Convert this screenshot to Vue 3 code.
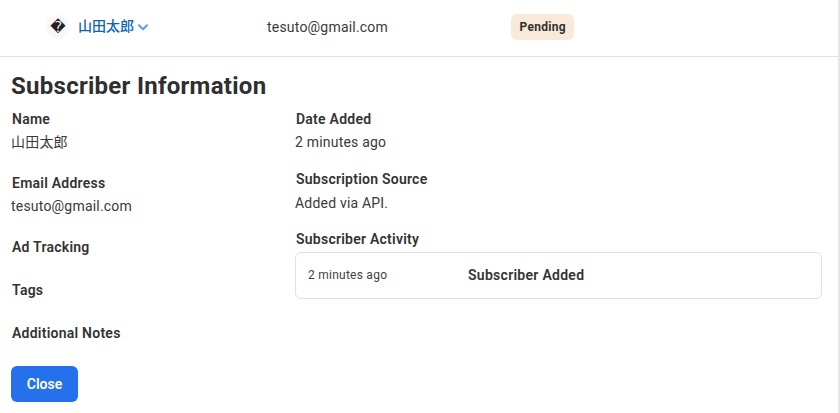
<script setup>
const left = [
  { label: 'Name', value: '山田太郎' },
  { label: 'Email Address', value: 'tesuto@gmail.com' },
  { label: 'Ad Tracking' },
  { label: 'Tags' },
  { label: 'Additional Notes' },
]
</script>

<template>
  <div class="page">
    <header class="top">
      <div class="who">
        <span class="avatar"><span class="glyph">�</span></span>
        <span class="name">山田太郎</span>
        <svg class="chev" width="10" height="7" viewBox="0 0 10 7" fill="none"><path d="M1 1.2 5 5.2 9 1.2" stroke="#5f9cf5" stroke-width="2" stroke-linecap="round" stroke-linejoin="round"/></svg>
      </div>
      <div class="email">tesuto@gmail.com</div>
      <span class="badge">Pending</span>
    </header>
    <main class="body">
      <h1>Subscriber Information</h1>
      <div class="cols">
        <div class="left">
          <div v-for="f in left" :key="f.label" class="field">
            <div class="label">{{ f.label }}</div>
            <div v-if="f.value" class="value">{{ f.value }}</div>
          </div>
          <button class="close">Close</button>
        </div>
        <div class="right">
          <div class="rfield">
            <div class="label">Date Added</div>
            <div class="value">2 minutes ago</div>
          </div>
          <div class="rfield">
            <div class="label">Subscription Source</div>
            <div class="value lower">Added via API.</div>
          </div>
          <div class="label">Subscriber Activity</div>
          <div class="activity">
            <span class="when">2 minutes ago</span>
            <span class="what">Subscriber Added</span>
          </div>
        </div>
      </div>
    </main>
  </div>
</template>

<style>
html, body { margin: 0; background: #fff; }
</style>

<style scoped>
.page {
  width: 840px;
  height: 413px;
  box-sizing: border-box;
  border-right: 2px solid #e5e7eb;
  overflow: hidden;
  font-family: Roboto, "Noto Sans CJK JP", sans-serif;
  color: #333;
}
.top {
  height: 57px;
  box-sizing: border-box;
  border-bottom: 1px solid #e0e0e8;
  display: flex;
  align-items: center;
  padding: 0 0 2px 46px;
}
.who { width: 221px; display: flex; align-items: center; }
.avatar {
  width: 24px; height: 24px; border-radius: 50%;
  background: #f6f8fb;
  display: flex; align-items: center; justify-content: center;
  margin-right: 8px;
}
.glyph { font: 15px/1 "DejaVu Sans", sans-serif; color: #222; }
.name { font-size: 14px; line-height: 20px; font-weight: 500; color: #0b66b5; margin-top: -2px; }
.chev { margin-left: 4px; margin-top: 0; }
.email { width: 244px; font-size: 14px; letter-spacing: .2px; color: #3a3a3a; }
.badge {
  background: #f8e9d8; border-radius: 6px; height: 26px;
  display: flex; align-items: center; padding: 0 8.5px;
  font-size: 12px; font-weight: 700; letter-spacing: .27px; color: #333;
}
.body { padding: 0 11px; }
h1 { margin: 14px 0 0; font-size: 24px; line-height: 30px; font-weight: 700; letter-spacing: .27px; color: #2f2f2f; }
.cols { display: flex; margin-top: 8px; }
.left { width: 285px; padding-left: 1px; box-sizing: border-box; }
.right { flex: 1; padding-right: 5px; }
.label { font-size: 14px; line-height: 20px; font-weight: 600; letter-spacing: .24px; color: #333; }
.value { font-size: 14px; line-height: 20px; margin: 3px 0 -2px -1px; color: #3a3a3a; letter-spacing: .2px; }
.value.lower { margin-top: 4px; margin-bottom: -3px; }
.field { margin-bottom: 23px; }
.rfield { margin-bottom: 19px; }
.close {
  display: block; margin: 23px 0 0 -1px;
  width: 67px; height: 36px; border: 0; border-radius: 6px;
  background: #2570eb; color: #fff;
  font: 600 14px Roboto, sans-serif;
}
.activity {
  margin-top: 3px; margin-left: -1px;
  height: 47px; box-sizing: border-box;
  border: 1px solid #e0e0e8; border-radius: 6px;
  display: flex; align-items: center; padding: 0 0 2px 12px;
}
.when { width: 160px; font-size: 12px; letter-spacing: .25px; color: #444; }
.what { font-size: 14px; font-weight: 600; letter-spacing: .28px; color: #333; }
</style>
